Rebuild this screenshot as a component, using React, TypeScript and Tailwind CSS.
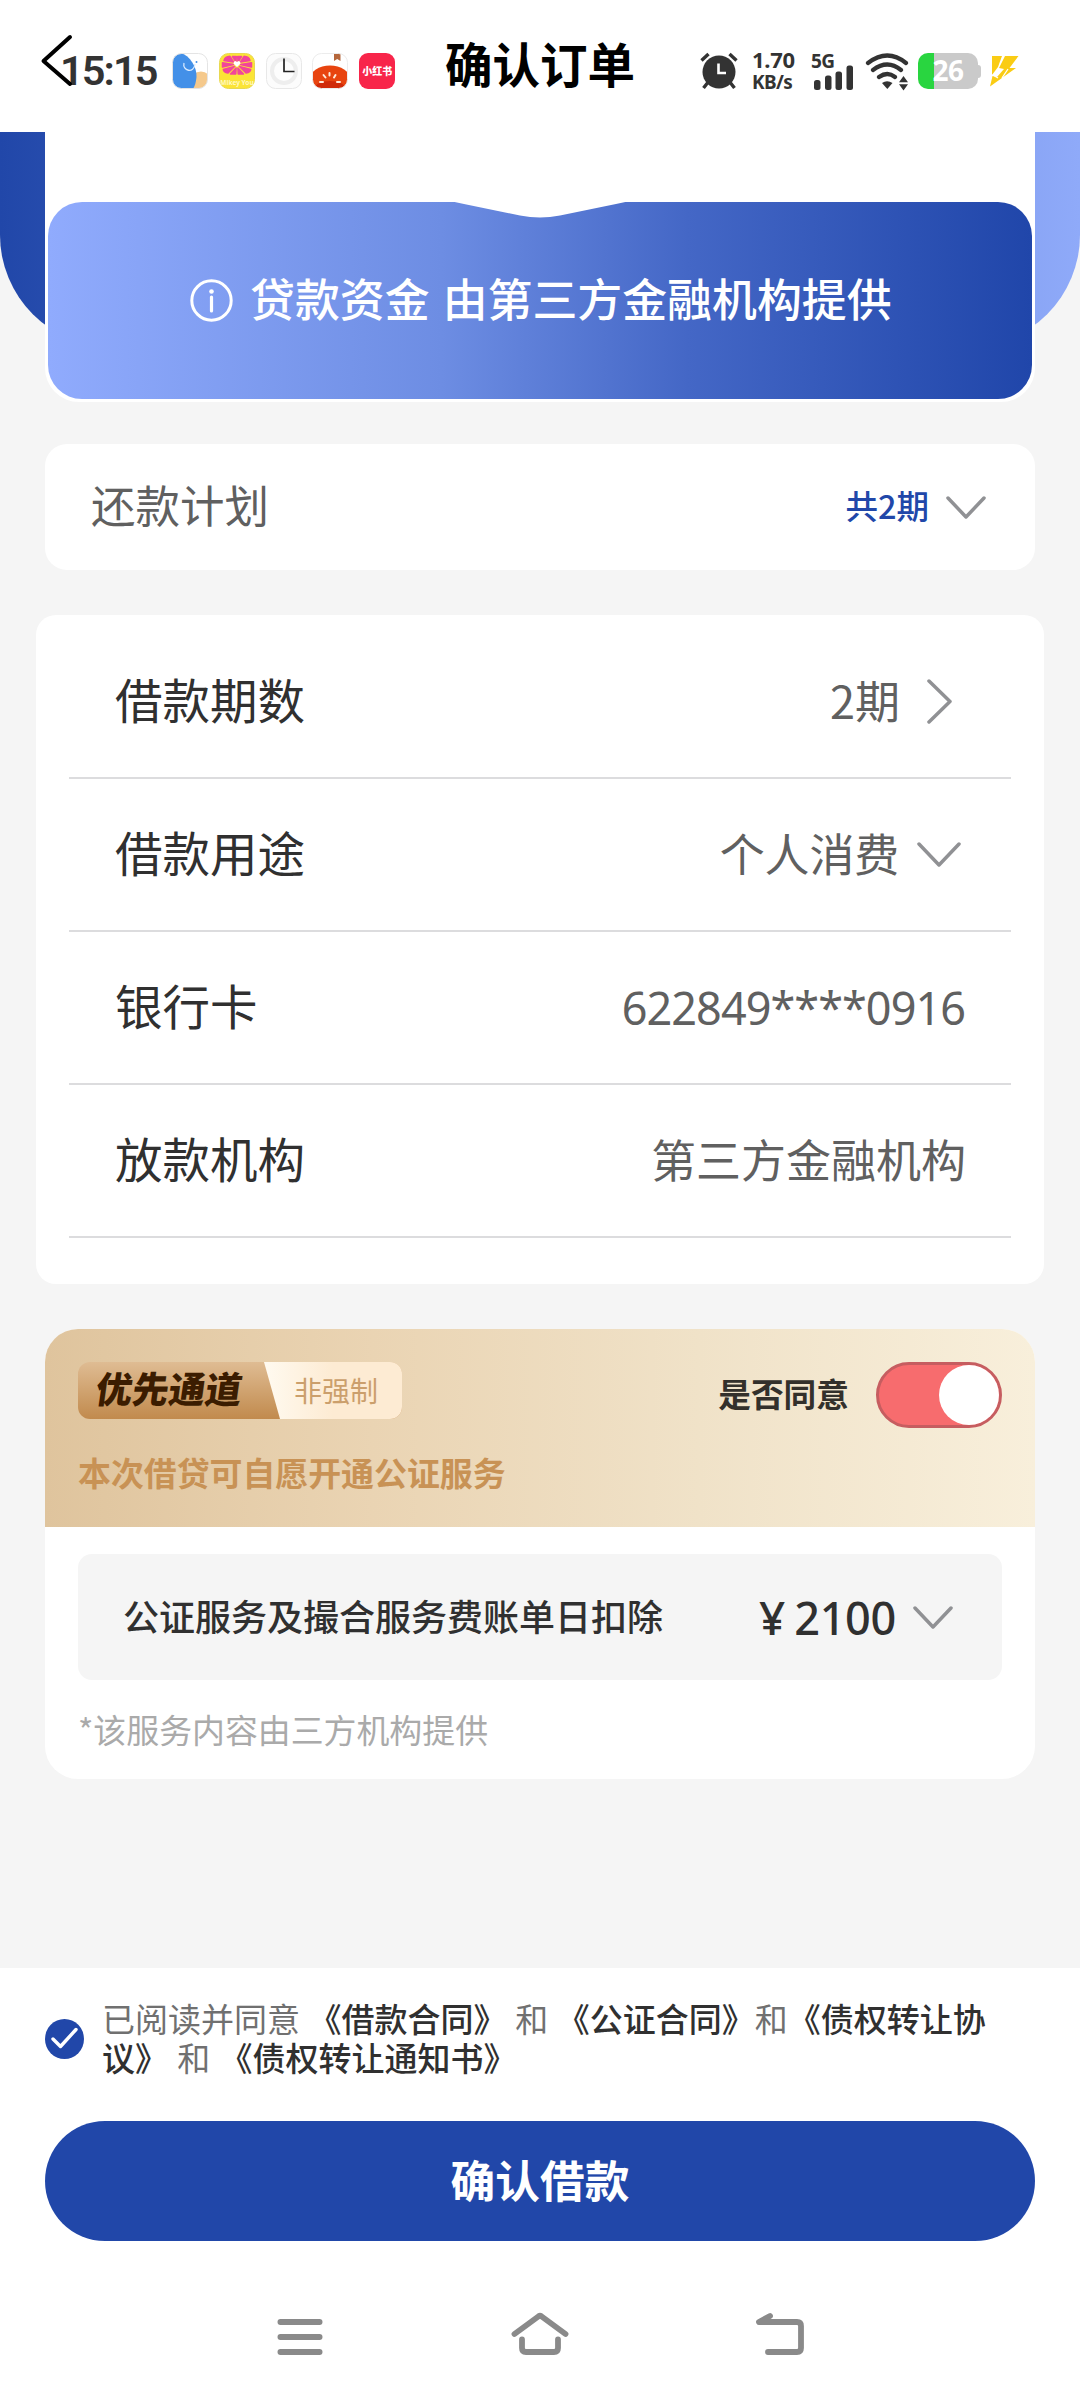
import type { ReactNode } from 'react';

const CJK = "font-['Noto_Sans_CJK_SC',sans-serif]";
const NUM = "font-['Noto_Sans','Noto_Sans_CJK_SC',sans-serif]";

function Chevron({ dir = 'down', w, h }: { dir?: 'down' | 'right'; w: number; h: number }) {
  const pts = dir === 'down' ? `2,2 ${w / 2},${h - 2} ${w - 2},2` : `2,2 ${w - 2},${h / 2} 2,${h - 2}`;
  return (
    <svg width={w} height={h} viewBox={`0 0 ${w} ${h}`} className="shrink-0">
      <polyline points={pts} fill="none" stroke="#909194" strokeWidth="3.500" strokeLinecap="round" strokeLinejoin="round" />
    </svg>
  );
}

function AppIcons() {
  return (
    <div className="mt-[53px] ml-[16px] flex gap-[10.800px]">
      <svg width="36" height="36" viewBox="0 0 36 36">
        <clipPath id="tile"><rect x="0.5" y="0.5" width="35" height="35" rx="9" /></clipPath>
        <g clipPath="url(#tile)">
          <rect width="36" height="36" fill="#fff" />
          <circle cx="29" cy="29" r="10.500" fill="#f5c98c" />
          <path d="M0 0H9C18 3 25 14 24.500 24C24 29 23 33 21 36H0Z" fill="#4390e8" />
          <path d="M12 10C10 18 22 21 23 11" fill="none" stroke="#d8eaff" strokeWidth="1.300" />
          <circle cx="24.500" cy="9" r="1" fill="#4390e8" />
        </g>
        <rect x="0.5" y="0.5" width="35" height="35" rx="9" fill="none" stroke="#e4e4e4" />
      </svg>
      <svg width="36" height="36" viewBox="0 0 36 36">
        <rect x="0.5" y="0.5" width="35" height="35" rx="9" fill="#fbe436" stroke="#e8d850" />
        <g fill="#f2459b" stroke="#f2459b" strokeWidth="1.500" strokeLinejoin="round">
          <path d="M17 9L13.500 3.500H17.300ZM19 9L18.700 3.500H22.500Z" />
          <path d="M14.500 9L5 7.500Q6 3.500 11 3.300ZM21.500 9L31 7.500Q30 3.500 25 3.300Z" />
          <path d="M14.500 11.500L3.500 14V9.800ZM21.500 11.500L32.500 14V9.800Z" />
          <path d="M15.500 13.500L9 20Q4.500 19.500 4.300 16.500ZM20.500 13.500L27 20Q31.500 19.500 31.700 16.500Z" />
          <path d="M17.100 15L16.800 21H11.500ZM18.900 15L19.200 21H24.500Z" />
        </g>
        <path d="M18 14L14.500 10.500Q14.500 8 16.500 8L18 9L19.500 8Q21.500 8 21.500 10.500Z" fill="#fff" />
        <text x="18" y="32" textAnchor="middle" fontSize="6.500" fontWeight="700" fill="#fff8c0" fontFamily="Noto Sans">Mikey You</text>
      </svg>
      <svg width="36" height="36" viewBox="0 0 36 36">
        <rect x="0.5" y="0.5" width="35" height="35" rx="9" fill="#fcfcfc" stroke="#e8e8e8" />
        <circle cx="18" cy="18" r="12" fill="#fdfdfd" stroke="#eeeeee" strokeWidth="4" />
        <path d="M18 5.500V18.500H28.500" fill="none" stroke="#222" strokeWidth="1.700" />
      </svg>
      <svg width="36" height="36" viewBox="0 0 36 36">
        <g clipPath="url(#tile)">
          <rect width="36" height="36" fill="#fff" />
          <ellipse cx="18" cy="26" rx="20" ry="13.500" fill="#e8440f" />
          <ellipse cx="18" cy="35" rx="15" ry="7" fill="#d02a08" />
          <path d="M22 0H28.500V8L25.200 6L22 8Z" fill="#b5673c" />
          <g stroke="#ffeada" strokeWidth="2" strokeLinecap="round">
            <path d="M17.500 20V22.500M11.500 22L13.500 24.500M23.500 22L22 24.500M8 29H11M25 29H28" />
          </g>
        </g>
        <rect x="0.5" y="0.5" width="35" height="35" rx="9" fill="none" stroke="#ececec" />
      </svg>
      <div className="flex h-9 w-9 items-center justify-center rounded-[9px] bg-[#f8254a]">
        <span className={`${CJK} text-[10px] leading-none font-black whitespace-nowrap text-white`}>小红书</span>
      </div>
    </div>
  );
}

function StatusIcons() {
  return (
    <div className={`${NUM} flex h-[132px] items-start text-[#333]`}>
      <svg width="38" height="38" viewBox="0 0 38 38" className="mt-[52px]">
        <g stroke="#333" strokeWidth="3.400" fill="none">
          <path d="M1.500 8.500L8.500 2M29.500 2L36.500 8.500M9 29L3.500 36M29 29L34.500 36" />
        </g>
        <circle cx="19" cy="20" r="16.500" fill="#333" />
        <path d="M18.500 11.500V21H26" fill="none" stroke="#fff" strokeWidth="2.600" />
      </svg>
      <div className="mt-[48px] ml-[14px] w-[44px] font-bold">
        <div className="text-[22px] leading-[23px] tracking-[-0.300px]">1.70</div>
        <div className="text-[19px] leading-[23px] tracking-[-0.600px]">KB/s</div>
      </div>
      <div className="mt-[51px] ml-[15px] w-[44px]">
        <div className="text-[19px] leading-[20px] font-bold tracking-[-0.500px]">5G</div>
        <svg width="44" height="26" viewBox="0 0 44 26" className="-mt-[6px] ml-[2px]">
          <g fill="#333">
            <rect x="1" y="15" width="6.500" height="10" rx="2.500" />
            <rect x="12" y="10.500" width="6.500" height="14.500" rx="2.500" />
            <rect x="22.500" y="6.500" width="6.500" height="18.500" rx="2.500" />
            <rect x="33.500" y="0.500" width="6.500" height="24.500" rx="2.500" />
          </g>
        </svg>
      </div>
      <svg width="46" height="38" viewBox="0 0 46 38" className="mt-[53px] ml-[10px]">
        <g fill="none" stroke="#333" strokeWidth="4.200" strokeLinecap="round">
          <path d="M3 10Q22.500 -5 41 10M8 17Q22.500 6 36 17M14 24Q22.500 18 30 24" />
        </g>
        <path d="M17 30Q22 26.500 27.500 30L22.300 36Z" fill="#333" />
        <path d="M38.500 23L43 29.300H34ZM38.500 37.500L43 31.300H34Z" fill="#333" />
      </svg>
      <div className="mt-[53px] ml-[7px] flex h-[36px] w-[60px] items-center justify-center rounded-[10px] bg-[linear-gradient(90deg,#29d540_16px,#cacaca_16px)]">
        <span className="pb-[2px] text-[28px] leading-none font-bold tracking-[-0.500px] text-white">26</span>
      </div>
      <div className="mt-[65px] h-[13px] w-[3px] rounded-r-[3px] bg-[#cacaca]" />
      <svg width="31" height="34" viewBox="0 0 31 34" className="mt-[54px] ml-[8px]">
        <path d="M3 2H13L9 13L3 21Z" fill="#facc14" />
        <path d="M16 2H29.500L20.500 14H27L1 32.500L3.500 22L8 23L15 15L10 14Z" fill="#facc14" />
        <path d="M11 17L4 21L9 24M19 15L13 24" fill="none" stroke="#fff" strokeWidth="1.300" />
      </svg>
    </div>
  );
}

function Row({ label, children }: { label: string; children: ReactNode }) {
  return (
    <div className="flex h-[153px] items-center justify-between border-b-2 border-[#dcdcde] pl-[46px] text-[45px] text-[#606060]">
      <span className="pb-[5px] text-[47.500px] text-[#303030]">{label}</span>
      {children}
    </div>
  );
}

function Doc({ children }: { children: ReactNode }) {
  return <span className="font-medium text-[#303030]">{children}</span>;
}

export default function App() {
  return (
    <div className={`${CJK} flex h-[2400px] w-[1080px] flex-col overflow-hidden bg-[#f5f5f5] leading-none`}>
      <header className="relative flex h-[132px] shrink-0 items-start justify-between bg-white pr-[60px] pl-[60px]">
        <svg width="34" height="56" viewBox="0 0 34 56" className="absolute top-[33px] left-[40px]">
          <polyline points="30,4 3.500,28 30,51" fill="none" stroke="#000" strokeWidth="4" strokeLinecap="round" strokeLinejoin="round" />
        </svg>
        <div className="flex">
          <span className="mt-[50px] w-[96px] font-['Roboto'] text-[41.500px] leading-[42px] font-semibold tracking-[-1.900px] whitespace-nowrap text-[#333]">15:15</span>
          <AppIcons />
        </div>
        <h1 className="absolute top-[39px] left-[445px] text-[47.500px] leading-[48px] font-bold text-black">确认订单</h1>
        <StatusIcons />
      </header>

      <section className="relative h-[312px] shrink-0">
        <div className="absolute inset-x-0 top-0 h-[215px] rounded-b-[112px] bg-[linear-gradient(90deg,#2147a9,#8faaf9)]" />
        <div className="relative mx-[45px] h-[270px] rounded-b-[34px] bg-white px-[3px] pt-[70px]">
          <div className="relative flex h-[197px] items-center rounded-[34px] bg-[linear-gradient(90deg,#90abfd,#6d8de3_40%,#4467c6_65%,#2046aa)] pl-[142px] text-white">
            <svg width="180" height="17" viewBox="0 0 180 17" className="absolute top-[-1px] left-[402px]">
              <path d="M0 0L14 3L70 14.500Q90 18.500 110 14.500L166 3L180 0Z" fill="#fff" />
            </svg>
            <svg width="43" height="43" viewBox="0 0 43 43">
              <circle cx="21.500" cy="21.500" r="19.700" fill="none" stroke="#fff" strokeWidth="3" />
              <circle cx="21.500" cy="12.500" r="2.300" fill="#fff" />
              <path d="M21.500 18V32" stroke="#fff" strokeWidth="3.200" strokeLinecap="round" />
            </svg>
            <span className="ml-[17px] pb-[4px] text-[44.900px] font-medium [word-spacing:3px] whitespace-nowrap">贷款资金 由第三方金融机构提供</span>
          </div>
        </div>
      </section>

      <section className="mx-[45px] flex h-[126px] shrink-0 items-center rounded-[22px] bg-white pr-[49px] pl-[46px]">
        <span className="flex-1 pb-[5px] text-[44.500px] text-[#606060]">还款计划</span>
        <span className="mr-[17px] pb-[3px] text-[32.500px] font-medium text-[#2147a9]">共2期</span>
        <Chevron w={40} h={23} />
      </section>

      <section className="mx-[36px] mt-[45px] h-[669px] shrink-0 rounded-[20px] bg-white px-[33px] pt-[11px]">
        <Row label="借款期数">
          <span className="ml-auto pb-[5px]">2期</span>
          <span className="mr-[59px] ml-[27px] flex"><Chevron dir="right" w={25} h={45} /></span>
        </Row>
        <Row label="借款用途">
          <span className="ml-auto pb-[5px] tracking-[-0.200px]">个人消费</span>
          <span className="mr-[50px] ml-[18px] flex"><Chevron w={44} h={25} /></span>
        </Row>
        <Row label="银行卡">
          <span className={`${NUM} mr-[46px] tracking-[-0.950px]`}>622849****0916</span>
        </Row>
        <Row label="放款机构">
          <span className="mr-[45px] pb-[5px]">第三方金融机构</span>
        </Row>
      </section>

      <section className="mx-[45px] mt-[45px] h-[450px] shrink-0 overflow-hidden rounded-[33px] bg-white">
        <div className="flex h-[198px] justify-between bg-[linear-gradient(90deg,#dfc49d,#ead4b3_33%,#f0e2c8_66%,#f8efdb)] px-[33px] pt-[33px]">
          <div>
            <div className="relative flex h-[57px] w-[324px] items-center overflow-hidden rounded-[12px] bg-[linear-gradient(180deg,#dfbc93,#c18a4d)]">
              <span className="ml-[18px] w-[185px] -skew-x-8 pb-[5px] text-[36.500px] font-black text-[#3b1c00]">优先通道</span>
              <div className="absolute inset-y-0 right-0 flex w-[138px] items-center bg-[linear-gradient(90deg,#fffaf0,#fdebd3_50%)] pb-[2px] pl-[30px] text-[28px] text-[#cb9f6c] [clip-path:polygon(0_0,100%_0,100%_100%,16px_100%)]">非强制</div>
            </div>
            <p className="mt-[37px] text-[32.900px] font-bold text-[#c89255]">本次借贷可自愿开通公证服务</p>
          </div>
          <div className="flex h-[66px] items-center">
            <span className="mr-[27px] pb-[4px] text-[32.700px] font-bold text-[#33302b]">是否同意</span>
            <span className="flex h-[66px] w-[126px] justify-end rounded-full border-[3px] border-[#c65d60] bg-[#f76c6e]">
              <span className="h-[60px] w-[60px] rounded-full bg-white" />
            </span>
          </div>
        </div>
        <div className="mx-[33px] mt-[27px] flex h-[126px] items-center rounded-[14px] bg-[#f5f5f5] pr-[49px] pl-[45px] text-[#303030]">
          <span className="pb-[4px] text-[36px] font-medium">公证服务及撮合服务费账单日扣除</span>
          <span className={`${NUM} ml-auto flex items-center font-medium`}>
            <span className="mr-[9px] text-[46px]">¥</span>
            <span className="mr-[17px] text-[45px] tracking-[-0.300px]">2100</span>
          </span>
          <Chevron w={40} h={23} />
        </div>
        <p className="mt-[33px] ml-[33px] text-[32.900px] text-[#aaaaaa]">*该服务内容由三方机构提供</p>
      </section>

      <footer className="mt-auto h-[432px] shrink-0 bg-white px-[45px] pt-[31px]">
        <div className="flex items-center">
          <svg width="39" height="40" viewBox="0 0 39 40" className="mt-[2px] shrink-0">
            <ellipse cx="19.500" cy="20" rx="19.500" ry="20" fill="#2147a9" />
            <path d="M8 20L15.500 27.500L31 10.500" fill="none" stroke="#fff" strokeWidth="3.400" strokeLinecap="round" strokeLinejoin="round" />
          </svg>
          <div className="ml-[18px] text-[33px] leading-[39px] whitespace-pre text-[#707070]">
            <div className="[word-spacing:1.200px]">已阅读并同意 <Doc>《借款合同》</Doc> 和 <Doc>《公证合同》</Doc>和<Doc>《债权转让协</Doc></div>
            <div className="[word-spacing:1.800px]"><Doc>议》</Doc> 和 <Doc>《债权转让通知书》</Doc></div>
          </div>
        </div>
        <button className="mt-[44px] flex h-[120px] w-full items-center justify-center rounded-full bg-[#2147a9] pb-[4px] text-[44.700px] font-bold text-white">确认借款</button>
        <nav className="mt-[68px] flex justify-center gap-[180px]">
          <svg width="60" height="60" viewBox="0 0 60 60" fill="none" stroke="#8a8a8a" strokeWidth="6" strokeLinecap="round">
            <path d="M10.500 13H49.500M10.500 28H49.500M10.500 43H49.500" />
          </svg>
          <svg width="60" height="60" viewBox="0 0 60 60" fill="none" stroke="#8a8a8a" strokeWidth="5.800" strokeLinecap="round" strokeLinejoin="round">
            <path d="M4.500 25L29 7Q30 6.300 31 7L55.500 25M12 30.500V39Q12 43 16 43H44Q48 43 48 39V30.500" />
          </svg>
          <svg width="60" height="60" viewBox="0 0 60 60" fill="none" stroke="#8a8a8a" strokeWidth="5.800" strokeLinecap="round" strokeLinejoin="round">
            <path d="M20 7L9 13H47Q51 13 51 17V39Q51 43 47 43H18" />
          </svg>
        </nav>
      </footer>
    </div>
  );
}
